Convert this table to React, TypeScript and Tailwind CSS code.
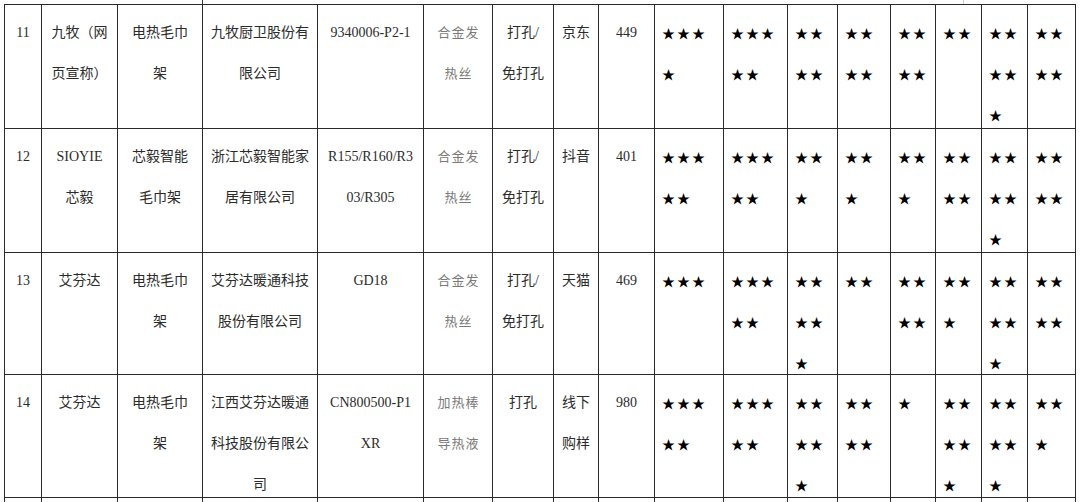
import React from 'react';

type Row = {
  no: string;
  brand: string[];
  product: string[];
  company: string[];
  model: string[];
  heating: string[];
  install: string[];
  channel: string[];
  price: string;
  stars: string[][];
  height: string;
};

const rows: Row[] = [
  {
    no: '11',
    brand: ['九牧（网', '页宣称）'],
    product: ['电热毛巾', '架'],
    company: ['九牧厨卫股份有', '限公司'],
    model: ['9340006-P2-1'],
    heating: ['合金发', '热丝'],
    install: ['打孔/', '免打孔'],
    channel: ['京东'],
    price: '449',
    stars: [
      ['★★★', '★'],
      ['★★★', '★★'],
      ['★★', '★★'],
      ['★★', '★★'],
      ['★★', '★★'],
      ['★★'],
      ['★★', '★★', '★'],
      ['★★', '★★'],
    ],
    height: 'h-[124px]',
  },
  {
    no: '12',
    brand: ['SIOYIE', '芯毅'],
    product: ['芯毅智能', '毛巾架'],
    company: ['浙江芯毅智能家', '居有限公司'],
    model: ['R155/R160/R3', '03/R305'],
    heating: ['合金发', '热丝'],
    install: ['打孔/', '免打孔'],
    channel: ['抖音'],
    price: '401',
    stars: [
      ['★★★', '★★'],
      ['★★★', '★★'],
      ['★★', '★'],
      ['★★', '★'],
      ['★★', '★'],
      ['★★', '★★'],
      ['★★', '★★', '★'],
      ['★★', '★★'],
    ],
    height: 'h-[124px]',
  },
  {
    no: '13',
    brand: ['艾芬达'],
    product: ['电热毛巾', '架'],
    company: ['艾芬达暖通科技', '股份有限公司'],
    model: ['GD18'],
    heating: ['合金发', '热丝'],
    install: ['打孔/', '免打孔'],
    channel: ['天猫'],
    price: '469',
    stars: [
      ['★★★'],
      ['★★★', '★★'],
      ['★★', '★★', '★'],
      ['★★'],
      ['★★', '★★'],
      ['★★', '★'],
      ['★★', '★★', '★'],
      ['★★', '★★'],
    ],
    height: 'h-[122px]',
  },
  {
    no: '14',
    brand: ['艾芬达'],
    product: ['电热毛巾', '架'],
    company: ['江西艾芬达暖通', '科技股份有限公', '司'],
    model: ['CN800500-P1', 'XR'],
    heating: ['加热棒', '导热液'],
    install: ['打孔'],
    channel: ['线下', '购样'],
    price: '980',
    stars: [
      ['★★★', '★★'],
      ['★★★', '★★'],
      ['★★', '★★', '★'],
      ['★★', '★★'],
      ['★'],
      ['★★', '★★', '★'],
      ['★★', '★★', '★'],
      ['★★', '★'],
    ],
    height: 'h-[123px]',
  },
];

const Lines: React.FC<{ lines: string[]; className?: string }> = ({ lines, className = '' }) => (
  <div className={`pt-[7px] leading-[41px] ${className}`}>
    {lines.map((l, i) => (
      <div key={i} className="whitespace-nowrap">
        {l}
      </div>
    ))}
  </div>
);

const cell = 'border-r border-b border-[#2a2a2a] overflow-visible';

const App: React.FC = () => {
  return (
    <div className="w-[1080px] h-[502px] bg-white overflow-hidden font-['Liberation_Serif','Noto_Sans_CJK_SC',serif] text-[14px] text-[#2b2b2b]">
      {/* bits of the section above */}
      <div className="flex h-[4px]">
        <div className="ml-[202px] w-px bg-[#333]" />
        <div className="ml-[760px] w-px bg-[#cfcfcf]" />
      </div>

      <div className="ml-[4px] grid w-fit grid-cols-[37px_76px_85px_115px_106px_69px_61px_45px_56px_69px_64px_50px_53px_45px_46px_46px_48px] border-l border-t border-[#2a2a2a]">
        {rows.map((r) => (
          <React.Fragment key={r.no}>
            <div className={`${cell} ${r.height} text-center`}>
              <Lines lines={[r.no]} />
            </div>
            <div className={`${cell} ${r.height} text-center`}>
              <Lines lines={r.brand} />
            </div>
            <div className={`${cell} ${r.height} text-center`}>
              <Lines lines={r.product} />
            </div>
            <div className={`${cell} ${r.height} text-center`}>
              <Lines lines={r.company} />
            </div>
            <div className={`${cell} ${r.height} text-center`}>
              <Lines lines={r.model} />
            </div>
            <div className={`${cell} ${r.height} text-center`}>
              <Lines lines={r.heating} className="text-[13px] tracking-[1px] pl-[1px] text-[#7a7a7a]" />
            </div>
            <div className={`${cell} ${r.height} text-center`}>
              <Lines lines={r.install} />
            </div>
            <div className={`${cell} ${r.height} text-center`}>
              <Lines lines={r.channel} />
            </div>
            <div className={`${cell} ${r.height} text-center`}>
              <Lines lines={[r.price]} />
            </div>
            {r.stars.map((s, i) => (
              <div key={i} className={`${cell} ${r.height}`}>
                <Lines
                  lines={s}
                  className="pl-[7px] font-['Noto_Sans_CJK_SC',sans-serif] text-[13px] tracking-[2px] text-black"
                />
              </div>
            ))}
          </React.Fragment>
        ))}
        {/* start of the next row */}
        {Array.from({ length: 17 }).map((_, i) => (
          <div key={i} className="h-[10px] border-r border-[#2a2a2a]" />
        ))}
      </div>
    </div>
  );
};

export default App;
